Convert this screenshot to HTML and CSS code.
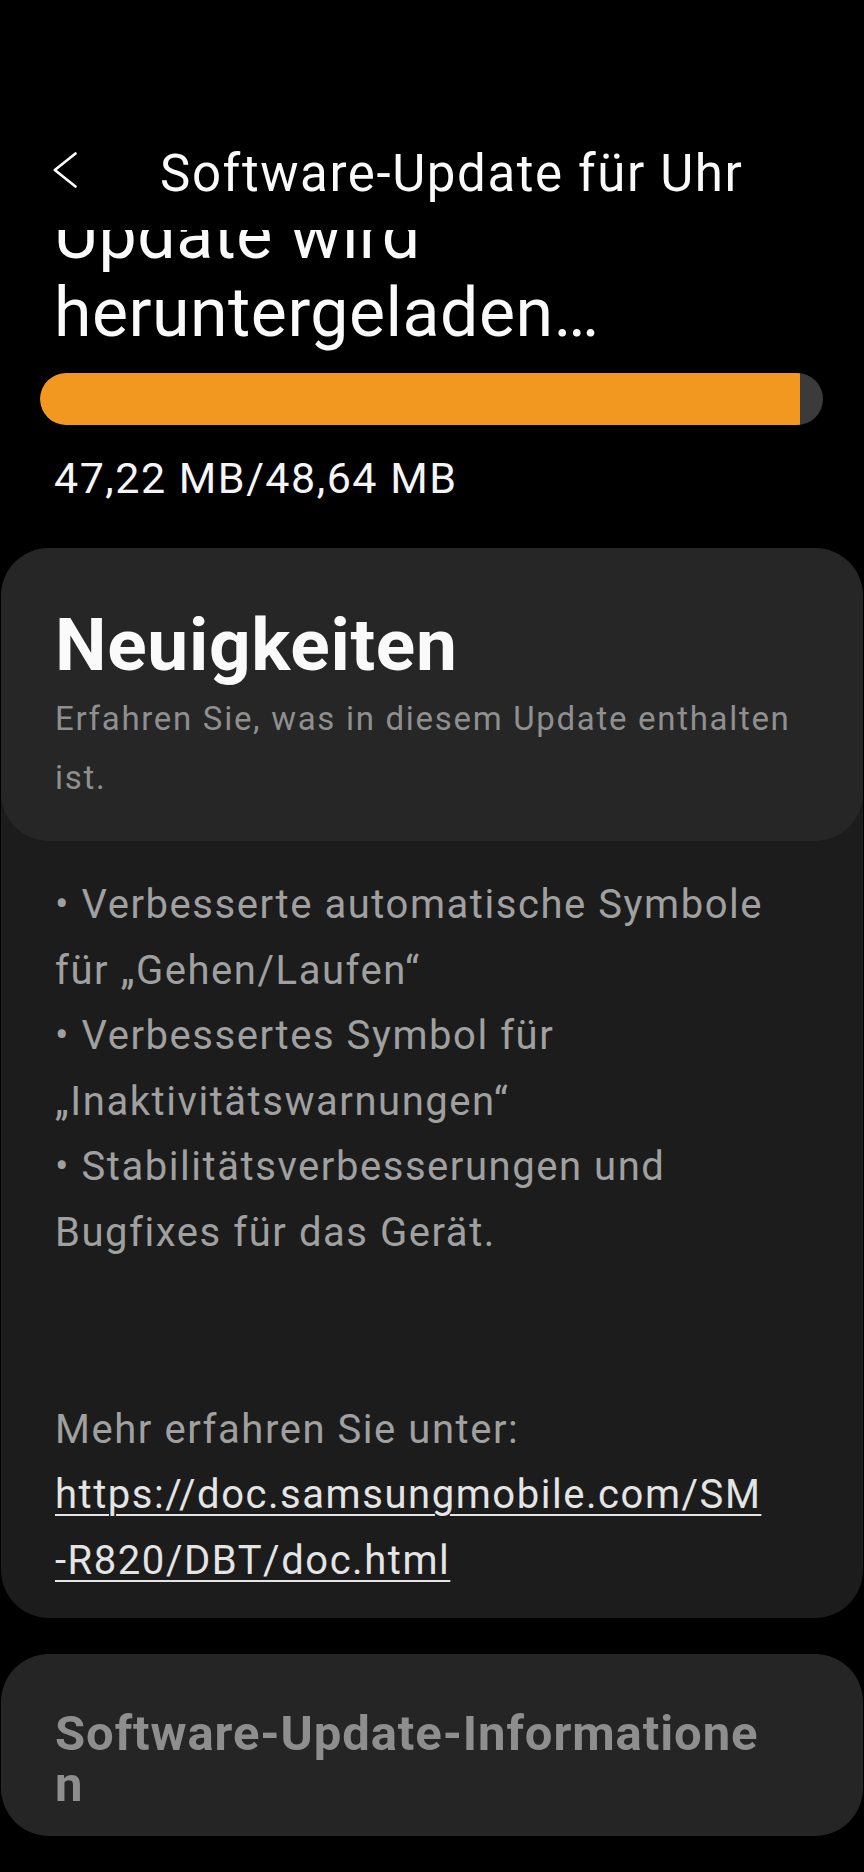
FILE: index.html
```html
<!doctype html>
<html>
<head>
<meta charset="utf-8">
<meta name="viewport" content="width=device-width, initial-scale=1.0">
<link rel="stylesheet" href="styles.css">
<title>Software-Update für Uhr</title>
</head>
<body>
<header class="appbar">
  <svg class="back" width="24" height="36" viewBox="0 0 24 36">
    <polyline points="22.5,1.5 1.8,18 22.5,34.5" fill="none" stroke="#fff" stroke-width="2.6" stroke-linecap="round" stroke-linejoin="round"/>
  </svg>
  <h1 class="appbar-title">Software-Update für Uhr</h1>
</header>

<main class="scroll">
  <h2 class="status">Update wird<br>heruntergeladen…</h2>

  <div class="progress">
    <div class="progress-fill" style="width: 97.1%"></div>
  </div>
  <p class="size">47,22 MB/48,64 MB</p>

  <section class="card">
    <div class="card-head">
      <h3 class="card-title">Neuigkeiten</h3>
      <p class="card-sub">Erfahren Sie, was in diesem Update enthalten ist.</p>
    </div>
    <div class="card-body">
      <p class="notes">• Verbesserte automatische Symbole für „Gehen/Laufen“
• Verbessertes Symbol für „Inaktivitätswarnungen“
• Stabilitätsverbesserungen und Bugfixes für das Gerät.


Mehr erfahren Sie unter:
<a href="#">https://doc.samsungmobile.com/SM<br>-R820/DBT/doc.html</a></p>
    </div>
  </section>

  <section class="card card-info">
    <h3 class="info-title">Software-Update-Informatione<br>n</h3>
  </section>
</main>
</body>
</html>
```

FILE: styles.css
```css
h1,
h2,
h3,
p {
    margin: 0;
    padding: 0;
    font-weight: normal;
}
body {
    margin: 0;
    background-color: #000;
    color: #fff;
    font-family: Roboto, "Noto Sans", sans-serif;
    height: 1872px;
    overflow: hidden;
}

/* top bar */
.appbar {
    height: 230px;
    box-sizing: border-box;
    padding: 144px 0 0 53px;
    display: flex;
    align-items: flex-start;
    background-color: #000;
}
.back {
    margin-top: 8px;
    flex: none;
}
.appbar-title {
    margin-left: 83px;
    font-size: 51px;
    line-height: 60px;
    letter-spacing: 1.6px;
    color: #fafafa;
}

/* scrolled content */
.scroll {
    height: 1642px;
    overflow: hidden;
}
.status {
    margin: -34px 54px 0 54px;
    font-size: 68px;
    line-height: 78px;
    letter-spacing: 0.5px;
    color: #fafafa;
}
.progress {
    margin: 21px 41px 0 40px;
    height: 52px;
    border-radius: 26px;
    background-color: #3b3b3b;
    overflow: hidden;
}
.progress-fill {
    height: 100%;
    background-color: #f29720;
    border-radius: 26px 0 0 26px;
}
.size {
    margin: 28px 54px 0 54px;
    font-size: 43px;
    line-height: 50px;
    letter-spacing: 1.5px;
    color: #f5f5f5;
}

/* cards */
.card {
    margin: 45px 1px 0 1px;
    background-color: #1c1c1c;
    border-radius: 48px;
}
.card-head {
    background-color: #262626;
    border-radius: 48px;
    padding: 53px 54px 34px 54px;
}
.card-title {
    font-size: 73px;
    line-height: 88px;
    letter-spacing: 0.7px;
    font-weight: bold;
    color: #fafafa;
}
.card-sub {
    font-size: 33px;
    line-height: 59px;
    letter-spacing: 1.7px;
    color: #8f8f8f;
}
.card-body {
    padding: 31px 54px 24px 54px;
}
.notes {
    white-space: pre-line;
    font-size: 40px;
    line-height: 65.6px;
    letter-spacing: 1.55px;
    color: #a0a0a0;
}
.notes a {
    color: #e4e4e4;
    text-decoration: underline;
    text-decoration-thickness: 2px;
    text-underline-offset: 6px;
}
.card-info {
    margin-top: 36px;
    background-color: #252525;
    padding: 54px 54px 26px 54px;
}
.info-title {
    font-size: 49px;
    line-height: 51px;
    letter-spacing: 0.9px;
    font-weight: bold;
    color: #8e8e8e;
}
```
